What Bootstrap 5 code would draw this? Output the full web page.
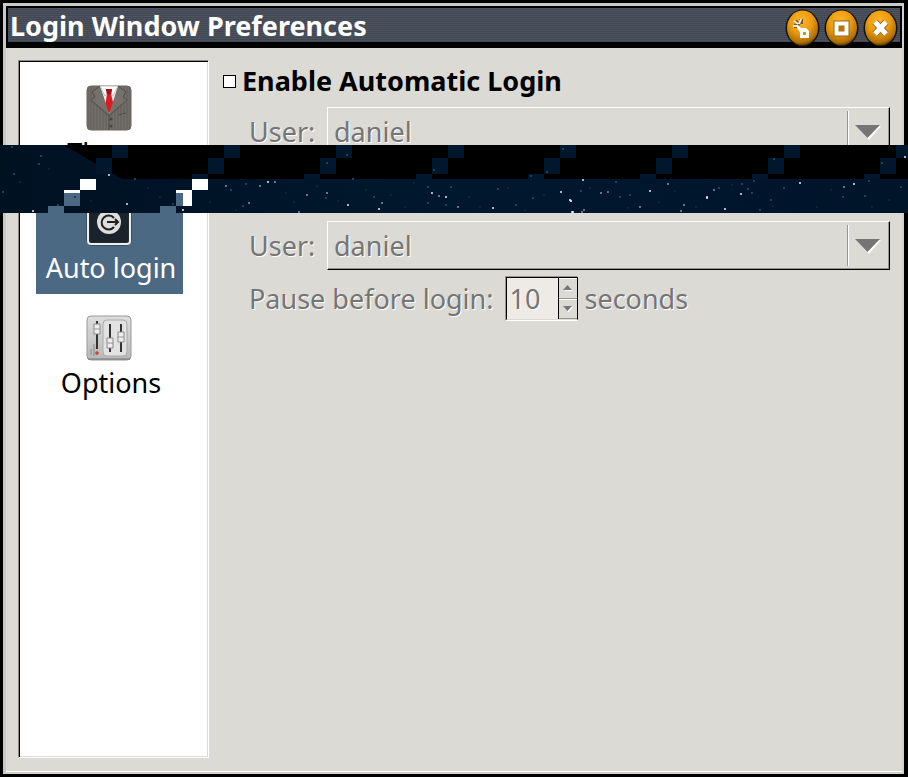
<!DOCTYPE html>
<html lang="en">
<head>
<meta charset="utf-8">
<meta name="viewport" content="width=device-width, initial-scale=1">
<title>Login Window Preferences</title>
<link href="https://cdn.jsdelivr.net/npm/bootstrap@5.3.0/dist/css/bootstrap.min.css" rel="stylesheet">
<style>
  body { background: #000; color: #000; font: 27px/36px "Noto Sans", sans-serif; padding: 3px 4px 3px 3px; }
  .win { background: #dbdad5; border: 2px solid #d0d0d0; border-left: 3px solid #c8c8c8; border-top: 3px solid #c9cbc8; box-shadow: inset 0 -1px #fff; }
  .titlebar { height: 42px; border: 2px solid #000; border-bottom: 6px solid #000; padding: 0 2px;
    background: repeating-linear-gradient(#4d535f 0 1px, #414752 1px 2px); color: #fff; }
  .titlebar h1 { font-size: 27px; line-height: 36px; }
  .titlebar button { height: 38px; width: 35px; }
  .titlebar svg { display: block; }
  .main-area { padding: 12px 12px 14px 12px; gap: 14px; }
  .pages { width: 191px; background: #fff; border: 1px solid #8e8b84; border-right-color: #fff; border-bottom-color: #fff;
    box-shadow: inset 1px 1px #000, inset -1px -1px #dbdad5; padding: 17px; gap: 14px; }
  .page-item { width: 147px; height: 101px; padding: 7px 0 0 3px; color: #000; }
  .page-item.active { background: #4b6983; color: #fff; }
  .page-item svg { display: block; margin: 0 0 4px 47px; }
  .etched { color: #757575; text-shadow: 1px 1px #fff; }
  .settings { padding-top: 3px; }
  .heading { gap: 6px; }
  .tick { appearance: none; width: 13px; height: 13px; border: 1px solid #000; background: #fff; margin: 0; }
  .tick:checked { background: #4b6983; }
  .fields { padding-left: 26px; }
  .user-row { display: grid; grid-template-columns: 78px 1fr; align-items: center; }
  .combo { display: grid; grid-template-columns: 1fr 42px; height: 49px; background: #dbdad5; border: 1px solid #000; border-top-color: #fff; border-left-color: #fff; box-shadow: inset -1px -1px #96958f; }
  .combo select { grid-area: 1 / 1 / 2 / 3; appearance: none; border: 0; background: none; padding: 0 48px 0 6px; opacity: 1; font: inherit; }
  .combo svg { grid-area: 1 / 2; pointer-events: none; }
  .second { margin-top: 65px; }
  .pause-row { margin-top: 6px; }
  .spin { width: 73px; height: 45px; margin: 0 6px 0 12px; border: 1px solid #96958f; border-right-color: #fff; border-bottom-color: #fff; }
  .spin > div { border: 1px solid #000; border-bottom-color: #dbdad5; }
  .spin input { width: 51px; min-width: 0; border: 0; background: #eeebe7; padding: 0 0 0 2px; font: inherit; }
  .spin-keys { width: 19px; border-left: 1px solid #000; }
  .spin-keys button { border: 0; padding: 0; background: #dbdad5; border-top: 1px solid #fff; border-bottom: 1px solid #96958f; }
  .spin-keys svg { display: block; margin: auto; }
  .sky { top: 145px; left: 0; height: 68px; width: 100%; }
</style>
<script src="https://cdn.jsdelivr.net/npm/bootstrap@5.3.0/dist/js/bootstrap.bundle.min.js"></script>
</head>
<body class="min-vh-100 d-flex position-relative">
<main class="win flex-fill d-flex flex-column">
  <header class="titlebar d-flex justify-content-between">
    <h1 class="m-0 fw-bold">Login Window Preferences</h1>
    <div class="d-flex gap-1">
      <button class="border-0 bg-transparent p-0" aria-label="Minimize">
        <svg width="35" height="38" viewBox="0 0 35 38">
          <defs><radialGradient id="gold" cx=".45" cy=".3" r=".72"><stop offset="0" stop-color="#ffb52a"/><stop offset=".5" stop-color="#eb9b0c"/><stop offset=".85" stop-color="#b06f05"/><stop offset="1" stop-color="#4c2e00"/></radialGradient></defs>
          <ellipse cx="17.500" cy="20" rx="17" ry="18.500" fill="#111"/><ellipse cx="17.500" cy="20" rx="15.500" ry="17.500" fill="url(#gold)"/>
          <path d="M10 13l5 4M16 11v5M9 18h5" stroke="#735c34" stroke-width="4"/><path d="M9 13l4 3m3-5l-2 5m-6 2h5" stroke="#f4ead4" stroke-width="2"/>
          <path d="M13 17l3 3h5l3 3v7h-9v-6l-3-4z" fill="#fff"/><path d="M18 24h3v3h-3z" fill="#d89318"/>
        </svg></button>
      <button class="border-0 bg-transparent p-0" aria-label="Maximize">
        <svg width="35" height="38" viewBox="0 0 35 38"><ellipse cx="17.500" cy="20" rx="17" ry="18.500" fill="#111"/><ellipse cx="17.500" cy="20" rx="15.500" ry="17.500" fill="url(#gold)"/><path d="M12 15h11v11H12z" fill="#b87608" stroke="#8f641c" stroke-width="5"/><path d="M12.500 15.500h10v10h-10z" fill="none" stroke="#fff" stroke-width="4"/></svg></button>
      <button class="border-0 bg-transparent p-0" aria-label="Close">
        <svg width="35" height="38" viewBox="0 0 35 38"><ellipse cx="17.500" cy="20" rx="17" ry="18.500" fill="#111"/><ellipse cx="17.500" cy="20" rx="15.500" ry="17.500" fill="url(#gold)"/><path d="M12 14l11 12M23 14L12 26" stroke="#94661b" stroke-width="7"/><path d="M12 14l11 12M23 14L12 26" stroke="#fff" stroke-width="5"/></svg></button>
    </div>
  </header>

  <div class="main-area d-flex flex-fill">
    <nav class="pages d-flex flex-column flex-shrink-0" aria-label="Sections">
      <a href="#" class="page-item text-center text-decoration-none">
        <svg width="46" height="46" viewBox="0 0 46 46">
          <defs><pattern id="pin" width="3" height="3" patternUnits="userSpaceOnUse"><path d="M0 0h3v3H0z" fill="#696662"/><path d="M0 0h1v3H0z" fill="#73706b"/></pattern></defs>
          <rect x="1" y="1" width="44" height="44" rx="4" fill="url(#pin)" stroke="#6a6764"/>
          <path d="M14 1h18L24 28h-1z" fill="#eee"/><path d="M14 1l5 10 4-6 4 6 5-10z" fill="#fff" stroke="#c4c4c4"/>
          <path d="M20 4h6l-1 5 3 12-5 7-4-7 2-12z" fill="#db1d22"/><path d="M20 4h6l-1 5h-4z" fill="#a70f16"/>
          <path d="M14 1L6 7l3 5-4 3 18 16v14M32 1l8 6-3 5 4 3-18 16" fill="none" stroke="#514e4b"/>
          <path d="M14 2L7 7l3 5-4 3 17 14zM32 2l7 5-3 5 4 3-17 14z" fill="#75726e"/>
          <path d="M32 30l8-2" stroke="#4c4a48"/><circle cx="25" cy="34" r="1.500" fill="#464442"/><circle cx="25" cy="41" r="1.500" fill="#464442"/>
        </svg>Theme</a>
      <a href="#" class="page-item active text-center text-decoration-none" aria-current="page">
        <svg width="46" height="46" viewBox="0 0 46 46"><rect x="2" y="1" width="42" height="43" rx="4" fill="#1a222b" stroke="#2d353c" stroke-width="3"/><rect x="2" y="1" width="42" height="43" rx="3" fill="none" stroke="#eee" stroke-width="2"/><circle cx="23" cy="22" r="12" fill="#dedede"/><path d="M28 18a7 7 0 1 0 0 9M21 22h11m-3-3l3 3-3 3" fill="none" stroke="#202020" stroke-width="2"/></svg>Auto login</a>
      <a href="#" class="page-item text-center text-decoration-none">
        <svg width="46" height="46" viewBox="0 0 46 46">
          <defs><linearGradient id="steel" x2="0" y2="1"><stop stop-color="#dedede"/><stop offset="1" stop-color="#b8b8b8"/></linearGradient></defs>
          <rect x="1" y="1" width="44" height="44" rx="4" fill="url(#steel)" stroke="#999"/><path d="M2 44h42" stroke="#777"/>
          <rect x="17" y="5" width="24" height="36" rx="4" fill="#e2e2e2" stroke="#aaa"/>
          <path d="M11 6v28M24 9v28M35 9v28" stroke="#333" stroke-width="2"/>
          <path d="M8 9h6v10H8zM21 23h6v10h-6zM32 17h6v10h-6z" fill="#eee" stroke="#8a8a8a"/><path d="M8 14h6M21 28h6M32 22h6" stroke="#999"/>
          <path d="M5 34v6M8 29v12" stroke="#888"/><circle cx="11" cy="38" r="1.500" fill="#e2491f" stroke="#8c4633" stroke-width=".5"/>
        </svg>Options</a>
    </nav>

    <form class="settings flex-fill">
      <div class="heading d-flex align-items-center fw-bold">
        <input class="tick" type="checkbox" id="auto"><label for="auto">Enable Automatic Login</label>
      </div>
      <div class="fields etched">
        <div class="user-row mt-2">
          <label for="user1">User:</label>
          <div class="combo"><select class="etched" id="user1" disabled><option>daniel</option></select>
            <svg width="42" height="47" viewBox="0 0 42 47"><path d="M.5 3v41" stroke="#96958f"/><path d="M1.500 3v41" stroke="#fff"/><path d="M9 18h25L22 32z" fill="#fff"/><path d="M8 17h25L20.500 30z" fill="#757575"/></svg></div>
        </div>
        <div class="user-row second">
          <label for="user2">User:</label>
          <div class="combo"><select class="etched" id="user2" disabled><option>daniel</option></select>
            <svg width="42" height="47" viewBox="0 0 42 47"><path d="M.5 3v41" stroke="#96958f"/><path d="M1.500 3v41" stroke="#fff"/><path d="M9 18h25L22 32z" fill="#fff"/><path d="M8 17h25L20.500 30z" fill="#757575"/></svg></div>
        </div>
        <div class="pause-row d-flex align-items-center">
          <label for="pause">Pause before login:</label>
          <div class="spin d-flex"><div class="d-flex flex-fill">
            <input class="etched" id="pause" type="text" value="10" disabled>
            <div class="spin-keys d-flex flex-column">
              <button class="flex-fill" type="button" disabled aria-label="Increase"><svg width="10" height="6" viewBox="0 0 10 6"><path d="M1 6h9L6 1z" fill="#fff"/><path d="M0 5h9L4.500 0z" fill="#757575"/></svg></button>
              <button class="flex-fill" type="button" disabled aria-label="Decrease"><svg width="10" height="6" viewBox="0 0 10 6"><path d="M1 1h9L5.500 6z" fill="#fff"/><path d="M0 0h9L4.500 5z" fill="#757575"/></svg></button>
            </div></div></div>
          <span>seconds</span>
        </div>
      </div>
    </form>
  </div>
</main>

<!-- Strip of night sky lying across the window -->
<svg class="sky position-absolute" viewBox="0 0 908 68" preserveAspectRatio="xMinYMin slice" aria-hidden="true">
  <defs>
    <linearGradient id="night"><stop stop-color="#001122"/><stop offset=".5" stop-color="#00182e"/><stop offset="1" stop-color="#00142a"/></linearGradient>
    <pattern id="steps" x="96" width="112" height="68" patternUnits="userSpaceOnUse"><path d="M16 0h16v13H16zM0 13h16v16H0zM96 29h16v5H96z" fill="#00172e"/></pattern>
  </defs>
  <path d="M0 0h908v68H0z" fill="url(#night)"/>
  <path d="M64 0h844v34H122z"/>
  <path d="M96 0h812v34H96z" fill="url(#steps)"/>
  <path d="M80 34h16v11H80zM64 45h16v4H64zM192 34h16v11h-16zM176 45h16v16h-16z" fill="#fff"/>
  <path d="M64 48h16v13H64zM48 61h16v7H48zM176 48h7v13h-7zM160 61h16v7h-16z" fill="#4b6983"/>
  <path stroke="#e4eefa" stroke-width="2" stroke-linecap="round" d="M109 30h0M127 59h0M33 66h0M183 65h0M268 37h0M348 60h0M379 64h0M432 48h0M446 52h0M493 63h0M561 47h0M570 55l1 1M583 35h0M650 46h0M707 52v1M741 49h0M725 64h0M800 38h0M854 39h0M905 12h0M572 67h1"/>
  <path stroke="#8297b0" stroke-width="2" stroke-linecap="round" d="M275 37h0M327 48h0M382 58h0M249 58h0M299 67h0M307 50h0M226 41h0M260 41h0M458 62h0M582 67h0M584 65h0M601 48h0M608 47h0M640 62h0M668 39h0M684 60h0M681 66h0M844 42h0M714 45h0M439 51h0"/>
  <path stroke="#2c5270" stroke-width="2" stroke-linecap="round" d="M41 11h0M3 47h0M135 34h0M39 19h0M12 2h0M58 60h0M173 59h0M14 29h0M231 45h0M246 39h0M243 61h0M326 53h0M353 34h0M347 10h0M374 52h0M428 42h0M428 58h0M451 42h0M446 60h0M516 60h0M547 27h0M563 4h0M616 37h0M581 46h0M620 52h0M630 50h0M754 36h0M742 39h0M719 43h0M748 44h0M752 48h0M771 55h0M784 43h0M901 42h0M843 52h0M865 51h0M882 18h0M774 14h0M498 44h0M533 53h0M327 18h0M434 25h0M869 36h0M760 65h0M531 31h0"/>
  <path stroke="#0b2b43" stroke-width="2" stroke-linecap="round" d="M20 37h0M49 24h0M75 52h0M91 56h0M148 43h0M160 52h0M210 57h0M236 65h0M286 48h0M294 57h0M317 41h0M338 56h0M366 45h0M391 50h0M405 62h0M414 38h0M469 52h0M480 62h0M508 43h0M525 65h0M544 50h0M590 43h0M628 63h0M659 57h0M675 46h0M696 62h0M732 40h0M773 61h0M817 62h0M831 45h0M872 62h0M889 55h0"/>
</svg>
</body>
</html>
